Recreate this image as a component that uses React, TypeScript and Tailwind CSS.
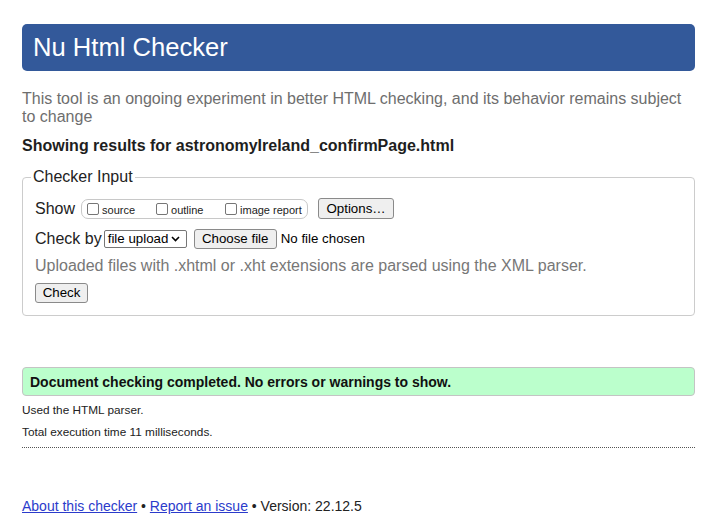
import React from "react";

function Box() {
  return <span className="inline-block w-[12px] h-[12px] border border-[#767676] rounded-[2px] bg-white mr-[3px]" />;
}

function Btn({ children, className = "" }: { children: React.ReactNode; className?: string }) {
  return (
    <span
      className={
        "inline-flex items-center justify-center h-[20px] border border-[#8a8a8a] rounded-[3px] bg-[#efefef] text-[13.3px] text-black leading-none " +
        className
      }
    >
      {children}
    </span>
  );
}

export default function App() {
  return (
    <div className="w-[701px] h-[516px] bg-white overflow-hidden" style={{ fontFamily: '"Liberation Sans", Arial, sans-serif' }}>
      <div className="ml-[22px] w-[673px]">
        <div className="mt-[24px] h-[47px] rounded-[5px] bg-[#33599a] flex items-center pl-[11px]">
          <span className="text-white text-[25.6px] leading-none">Nu Html Checker</span>
        </div>

        <p className="mt-[19px] text-[16px] leading-[18px] text-[#6e6e6e]">
          This tool is an ongoing experiment in better HTML checking, and its behavior remains subject to change
        </p>

        <p className="mt-[11px] text-[16px] leading-[18px] font-bold text-[#1e1e1e]">
          Showing results for astronomyIreland_confirmPage.html
        </p>

        <fieldset className="mt-[13px] border border-[#cccccc] rounded-[4px] px-[12px] pb-[12px]">
          <legend className="ml-[-4px] px-[2px] text-[16px] leading-[18px] text-[#222]">Checker Input</legend>

          <div className="mt-[12px] flex items-center h-[21px]">
            <span className="text-[16px] leading-none text-[#222]">Show</span>
            <span className="ml-[6px] h-[20px] w-[227px] border border-[#c8c8c8] rounded-[7px] flex items-center pl-[5px] text-[11px] text-[#222]">
              <span className="flex items-center w-[69px]">
                <Box />
                <span className="mt-[3px]">source</span>
              </span>
              <span className="flex items-center w-[69px]">
                <Box />
                <span className="mt-[3px]">outline</span>
              </span>
              <span className="flex items-center">
                <Box />
                <span className="mt-[3px]">image report</span>
              </span>
            </span>
            <Btn className="ml-[10px] w-[76px] h-[21px]">Options…</Btn>
          </div>

          <div className="mt-[10px] flex items-center h-[19px]">
            <span className="text-[16px] leading-none text-[#222]">Check by</span>
            <span className="ml-[2px] h-[18px] w-[83px] border border-[#767676] rounded-[2px] bg-white flex items-center pl-[3px] text-[13.3px] text-black leading-none">
              file upload
              <svg className="ml-[3px]" width="9" height="6" viewBox="0 0 9 6">
                <path d="M1 1 L4.5 4.5 L8 1" fill="none" stroke="#000" strokeWidth="1.6" />
              </svg>
            </span>
            <Btn className="ml-[7px] w-[83px] h-[20px]">Choose file</Btn>
            <span className="ml-[4px] text-[13.3px] text-black leading-none">No file chosen</span>
          </div>

          <p className="mt-[9px] text-[16px] leading-[18px] text-[#777]">
            Uploaded files with .xhtml or .xht extensions are parsed using the XML parser.
          </p>

          <div className="mt-[8px] flex">
            <Btn className="w-[53px] h-[20px]">Check</Btn>
          </div>
        </fieldset>

        <div className="mt-[51px] h-[29px] border border-[#c4c4c4] rounded-[4px] bg-[#bbffcc] flex items-center pl-[7px]">
          <span className="text-[14px] font-bold text-[#111] leading-none">
            Document checking completed. No errors or warnings to show.
          </span>
        </div>

        <div className="border-b border-dotted border-[#555] pb-[8px]">
          <p className="mt-[7px] text-[11.8px] leading-[14px] text-[#222]">Used the HTML parser.</p>
          <p className="mt-[8px] text-[11.8px] leading-[14px] text-[#222]">Total execution time 11 milliseconds.</p>
        </div>

        <p className="mt-[50px] text-[14px] leading-[16px] text-[#222]">
          <a className="text-[#2b3bcb] underline">About this checker</a>
          {" • "}
          <a className="text-[#2b3bcb] underline">Report an issue</a>
          {" • Version: 22.12.5"}
        </p>
      </div>
    </div>
  );
}
